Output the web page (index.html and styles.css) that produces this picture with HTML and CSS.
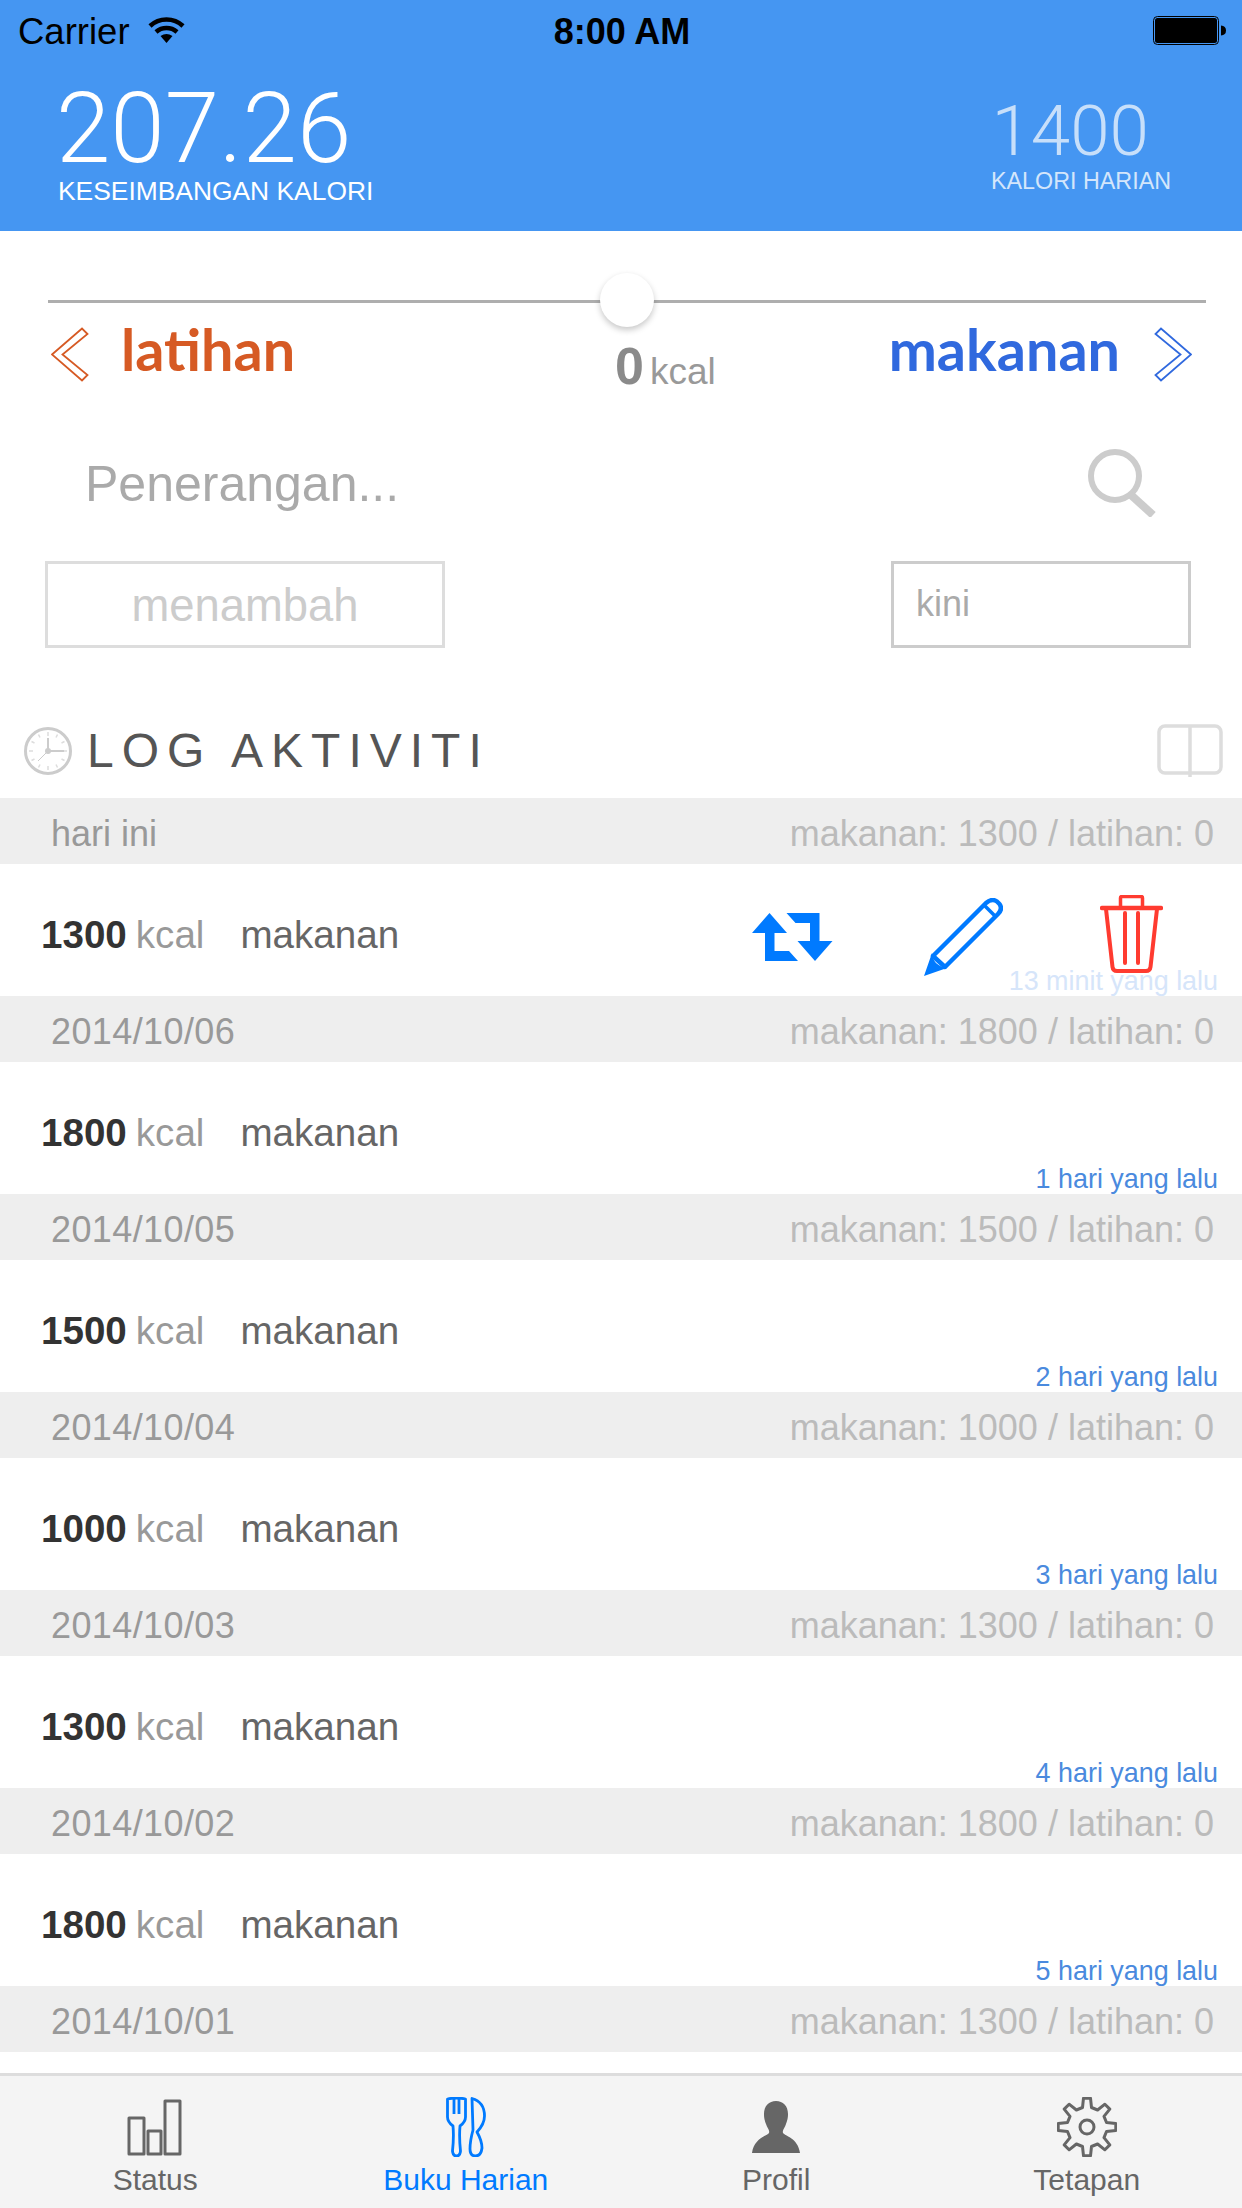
FILE: index.html
```html
<!DOCTYPE html>
<html lang="ms">
<head>
<meta charset="utf-8">
<title>Buku Harian</title>
<link rel="stylesheet" href="styles.css">
</head>
<body>
<div class="app">
  <header class="header">
    <div class="statusbar">
      <div class="status-left">
        <span class="carrier">Carrier</span>
        <svg class="wifi" viewBox="0 0 37 27"><path d="M2 10A24 24 0 0 1 35 10M8 16A16 16 0 0 1 29 16" fill="none" stroke="#000" stroke-width="4.5"/><path d="M12.500 20Q18.500 16 24.500 20L18.500 27Z"/></svg>
      </div>
      <span class="clock">8:00 AM</span>
      <svg class="battery" viewBox="0 0 73 29"><rect x="0.500" y="0.500" width="65" height="28" rx="4" fill="none" stroke="#000"/><rect x="2" y="2" width="62" height="25" rx="2.500"/><path d="M68 9.500Q73 10 73 14.500T68 19.500Z"/></svg>
    </div>
    <div class="stats">
      <div class="stat-main">
        <div class="stat-main-value">207.26</div>
        <div class="stat-main-label">KESEIMBANGAN KALORI</div>
      </div>
      <div class="stat-side">
        <div class="stat-side-value">1400</div>
        <div class="stat-side-label">KALORI HARIAN</div>
      </div>
    </div>
  </header>

  <section class="controls">
    <div class="slider"><span class="slider-thumb"></span></div>
    <div class="choice-row">
      <div class="choice choice-left">
        <svg class="chevron" viewBox="0 0 38 55"><path d="M1 27.500L31 1.500L36.500 7L11.500 27.500L36.500 48L31 53.500Z" fill="none" stroke="#d65a24" stroke-width="1.800"/></svg>
        <span>latihan</span>
      </div>
      <div class="amount"><b>0</b><span>kcal</span></div>
      <div class="choice choice-right">
        <span>makanan</span>
        <svg class="chevron" viewBox="0 0 38 55"><path d="M37 27.500L7 1.500L1.500 7L26.500 27.500L1.500 48L7 53.500Z" fill="none" stroke="#3069de" stroke-width="1.800"/></svg>
      </div>
    </div>
    <div class="search-row">
      <span class="search-placeholder">Penerangan...</span>
      <svg class="search-icon" viewBox="0 0 68 68"><circle cx="27" cy="27" r="24" fill="none" stroke="#ccc" stroke-width="6"/><path d="M43 46L65 66" stroke="#ccc" stroke-width="8" fill="none"/></svg>
    </div>
    <div class="button-row">
      <div class="btn-add">menambah</div>
      <div class="btn-now">kini</div>
    </div>
  </section>

  <div class="log-title">
    <svg class="log-clock" viewBox="0 0 48 48"><circle cx="24" cy="24" r="22.500" fill="none" stroke="#ccc" stroke-width="3"/><path d="M24 5V9M24 39V43M5 24H9M39 24H43M14.500 7.500L16 10.500M33.500 7.500L32 10.500M7.500 14.500L10.500 16M40.500 14.500L37.500 16M7.500 33.500L10.500 32M40.500 33.500L37.500 32M14.500 40.500L16 37.500M33.500 40.500L32 37.500" stroke="#ddd" stroke-width="1.500"/><path d="M24 11V24H40" fill="none" stroke="#ccc" stroke-width="2"/><path d="M24 24L14 34" stroke="#ccc" stroke-width="1"/><circle cx="24" cy="24" r="3" fill="#ccc"/></svg>
    <span class="log-text">LOG AKTIVITI</span>
    <svg class="log-book" viewBox="0 0 66 53"><rect x="2" y="2" width="62" height="47" rx="6" fill="none" stroke="#ddd" stroke-width="3.500"/><path d="M33 2V53" stroke="#ddd" stroke-width="3.500"/></svg>
  </div>

  <main class="list">
    <div class="day"><span>hari ini</span><span class="day-sum">makanan: 1300 / latihan: 0</span></div>
    <div class="entry">
      <b class="entry-num">1300</b><span class="entry-unit">kcal</span><span class="entry-type">makanan</span>
      <span class="entry-time entry-time-faded">13 minit yang lalu</span>
      <div class="entry-actions">
        <svg class="act-repeat" viewBox="0 0 80.500 48"><path d="M17.500 0L35 20H22.500V38H37L46 48H13V20H0Z" fill="#007aff"/><path d="M63 48L45.500 28H58V10H43.500L34.500 0H67.500V28H80.500Z" fill="#007aff"/></svg>
        <svg class="act-edit" viewBox="0 0 79 78"><path d="M9 58L62 5Q68 0 73 3.500L75.500 6Q79 11 74 16L21 69Z" fill="none" stroke="#007aff" stroke-width="4.500" stroke-linejoin="round"/><path d="M61 8L71 18" stroke="#007aff" stroke-width="3.500"/><path d="M8 55L0 78L23 70Q18 70 12 65Q8 60 8 55Z" fill="#007aff"/></svg>
        <svg class="act-trash" viewBox="0 0 63 78"><path d="M2 13H61" stroke="#ff3b30" stroke-width="4.500" stroke-linecap="round"/><path d="M20.500 12V3Q20.500 1.500 22 1.500H41Q42.500 1.500 42.500 3V12" fill="none" stroke="#ff3b30" stroke-width="3.500"/><path d="M6 14L12.500 72Q13 76 17 76H46Q50 76 50.500 72L57 14" fill="none" stroke="#ff3b30" stroke-width="4"/><path d="M25 18V68M38 18V68" stroke="#ff3b30" stroke-width="4" stroke-linecap="round"/></svg>
      </div>
    </div>
    <div class="day"><span class="day-date">2014/10/06</span><span class="day-sum">makanan: 1800 / latihan: 0</span></div>
    <div class="entry"><b class="entry-num">1800</b><span class="entry-unit">kcal</span><span class="entry-type">makanan</span><span class="entry-time">1 hari yang lalu</span></div>
    <div class="day"><span class="day-date">2014/10/05</span><span class="day-sum">makanan: 1500 / latihan: 0</span></div>
    <div class="entry"><b class="entry-num">1500</b><span class="entry-unit">kcal</span><span class="entry-type">makanan</span><span class="entry-time">2 hari yang lalu</span></div>
    <div class="day"><span class="day-date">2014/10/04</span><span class="day-sum">makanan: 1000 / latihan: 0</span></div>
    <div class="entry"><b class="entry-num">1000</b><span class="entry-unit">kcal</span><span class="entry-type">makanan</span><span class="entry-time">3 hari yang lalu</span></div>
    <div class="day"><span class="day-date">2014/10/03</span><span class="day-sum">makanan: 1300 / latihan: 0</span></div>
    <div class="entry"><b class="entry-num">1300</b><span class="entry-unit">kcal</span><span class="entry-type">makanan</span><span class="entry-time">4 hari yang lalu</span></div>
    <div class="day"><span class="day-date">2014/10/02</span><span class="day-sum">makanan: 1800 / latihan: 0</span></div>
    <div class="entry"><b class="entry-num">1800</b><span class="entry-unit">kcal</span><span class="entry-type">makanan</span><span class="entry-time">5 hari yang lalu</span></div>
    <div class="day"><span class="day-date">2014/10/01</span><span class="day-sum">makanan: 1300 / latihan: 0</span></div>
  </main>

  <nav class="tabbar">
    <div class="tab">
      <svg class="tab-icon" viewBox="0 0 60 60"><g fill="none" stroke="#666" stroke-width="3" stroke-linejoin="round"><rect x="4" y="21" width="15" height="36"/><rect x="23" y="34" width="13" height="23"/><rect x="40" y="4" width="15" height="53"/></g></svg>
      <span>Status</span>
    </div>
    <div class="tab tab-active">
      <svg class="tab-icon" viewBox="-10 0 60 60"><g fill="none" stroke="#007aff" stroke-width="2.800" stroke-linejoin="round"><path d="M1.500 2Q10.500 0 19.500 2V20Q19.500 25 14 29Q13 40 14.500 54Q14 59 10.500 59Q7 59 6.500 54Q8 40 7 29Q1.500 25 1.500 20Z"/><path d="M8 2V17M13 2V17"/><path d="M26 1.500Q38.500 5 38.500 19Q38.500 27 31 35Q36 44 36 51Q35 59 29.500 59Q24 59 24 52Q24 44 27 33Z"/></g></svg>
      <span>Buku Harian</span>
    </div>
    <div class="tab">
      <svg class="tab-icon" viewBox="-6 -4 60 60"><path d="M24 0C31 0 36 5 36 13C36 18 35 20 34 23C33 27 30 29 31 32C33 35 46 37 48 52L0 52C2 37 15 35 17 32C18 29 15 27 14 23C13 20 12 18 12 13C12 5 17 0 24 0Z" fill="#666"/></svg>
      <span>Profil</span>
    </div>
    <div class="tab">
      <svg class="tab-icon" viewBox="-30 -30 60 60"><g fill="none" stroke="#666" stroke-width="3" stroke-linejoin="round"><path d="M-4.500 -19.500L-3.500 -28.800H3.500L4.500 -19.500L10.600 -17L17.900 -22.800L22.800 -17.900L17 -10.600L19.500 -4.500L28.800 -3.500V3.500L19.500 4.500L17 10.600L22.800 17.900L17.900 22.800L10.600 17L4.500 19.500L3.500 28.800H-3.500L-4.500 19.500L-10.600 17L-17.900 22.800L-22.800 17.900L-17 10.600L-19.500 4.500L-28.800 3.500V-3.500L-19.500 -4.500L-17 -10.600L-22.800 -17.900L-17.900 -22.800L-10.600 -17Z"/><circle r="7"/></g></svg>
      <span>Tetapan</span>
    </div>
  </nav>
</div>
</body>
</html>
```

FILE: styles.css
```css
* { box-sizing: border-box; }
html, body { margin: 0; padding: 0; }
body { background: #fff; font-family: "Liberation Sans", Arial, sans-serif; }
.app { width: 1242px; height: 2208px; display: flex; flex-direction: column; overflow: hidden; background: #fff; }

.header { height: 231px; background: #4596f2; flex: none; }
.statusbar { height: 62px; padding: 9px 16px 0 18px; display: grid; grid-template-columns: 1fr auto 1fr; align-items: start; }
.status-left { display: flex; align-items: flex-start; }
.carrier { font-size: 36.500px; line-height: 46px; color: #000; }
.wifi { width: 37px; height: 27px; margin: 7px 0 0 18px; }
.clock { font-size: 36px; line-height: 46px; font-weight: bold; color: #000; }
.battery { width: 73px; height: 29px; margin-top: 7px; justify-self: end; }

.stats { display: flex; justify-content: space-between; padding: 20px 71px 0 56px; }
.stat-main-value { font-family: Roboto, sans-serif; font-weight: 300; font-size: 98px; line-height: 94px; color: #fff; }
.stat-main-label { font-size: 26.400px; line-height: 30px; color: #fff; margin: 0 0 0 2px; }
.stat-side { text-align: right; padding-top: 14px; }
.stat-side-value { font-family: Roboto, sans-serif; font-weight: 300; font-size: 71px; line-height: 70px; color: #c7dffa; margin-right: 22px; }
.stat-side-label { font-size: 23.300px; line-height: 28px; color: #d4e6fb; margin-top: 1px; }

.controls { flex: none; padding: 69px 36px 0 48px; height: 462px; }
.slider { height: 3px; background: #aeaeae; position: relative; }
.slider-thumb { position: absolute; left: 552px; top: -27px; width: 54px; height: 54px; border-radius: 50%; background: #fff; box-shadow: 0 3px 6px rgba(0,0,0,.22); }
.choice-row { display: flex; align-items: flex-start; margin-top: 13px; padding: 0 14px 0 3px; }
.choice { display: flex; align-items: center; font-family: Lato, sans-serif; font-weight: bold; font-size: 57.500px; line-height: 60px; }
.choice-left { color: #d65a24; gap: 32px; width: 564px; }
.choice-right { color: #3069de; gap: 34px; margin-left: auto; }
.chevron { width: 38px; height: 55px; flex: none; margin-top: 11px; }
.amount { display: flex; align-items: baseline; padding-top: 22px; color: #999; font-size: 37px; line-height: 56px; }
.amount b { font-size: 52px; color: #8a8a8a; margin-right: 6px; }
.search-row { display: flex; justify-content: space-between; align-items: flex-start; margin-top: 50px; padding: 0 50px 0 37px; }
.search-placeholder { font-size: 50px; line-height: 68px; color: #aaa; }
.search-icon { width: 68px; height: 68px; margin-top: -1px; }
.button-row { display: flex; justify-content: space-between; margin: 43px 15px 0 -3px; }
.btn-add { width: 400px; height: 87px; border: 3px solid #ddd; font-size: 45.400px; line-height: 84px; color: #ccc; text-align: center; }
.btn-now { width: 300px; height: 87px; border: 3px solid #ccc; font-size: 36px; line-height: 80px; color: #aaa; padding-left: 22px; }

.log-title { flex: none; height: 105px; display: flex; align-items: center; padding: 10px 19px 0 24px; }
.log-clock { width: 48px; height: 48px; flex: none; }
.log-text { font-size: 48px; letter-spacing: 8px; color: #555; margin-left: 15px; }
.log-book { width: 66px; height: 53px; margin-left: auto; }

.list { flex: 1; min-height: 0; overflow: hidden; }
.day { height: 66px; background: #eee; display: flex; justify-content: space-between; align-items: center; padding: 5px 28px 0 51px; font-size: 36px; color: #999; }
.day-date { letter-spacing: .4px; }
.day-sum { color: #bbb; }
.entry { height: 132px; position: relative; display: flex; align-items: center; padding: 10px 24px 0 41px; font-size: 38.600px; }
.entry-num { color: #333; font-weight: bold; }
.entry-unit { color: #999; margin-left: 9px; }
.entry-type { color: #666; margin-left: 36px; }
.entry-time { position: absolute; right: 24px; bottom: 0; font-size: 26.900px; line-height: 30px; color: #4a8ade; }
.entry-time-faded { color: #d6e5fa; }
.entry-actions { position: absolute; left: 752px; top: 31px; width: 411px; height: 78px; display: flex; align-items: flex-start; }
.act-repeat { width: 80.500px; height: 48px; margin-top: 18px; }
.act-edit { width: 79px; height: 78px; margin-left: 91px; margin-top: 3px; }
.act-trash { width: 63px; height: 78px; margin-left: 97px; }

.tabbar { flex: none; height: 135px; background: #f4f4f4; border-top: 3px solid #ddd; display: grid; grid-template-columns: repeat(4, 1fr); }
.tab { display: flex; flex-direction: column; align-items: center; padding-top: 21px; font-size: 30px; line-height: 36px; color: #666; }
.tab-active { color: #007aff; }
.tab-icon { width: 60px; height: 60px; flex: none; margin-bottom: 5px; }
```
